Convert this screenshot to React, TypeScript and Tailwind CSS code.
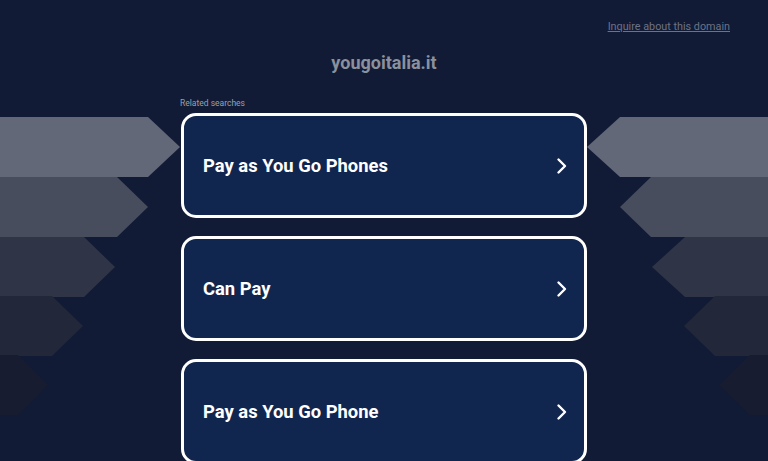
import React from "react";

const items = ["Pay as You Go Phones", "Can Pay", "Pay as You Go Phone"];

function Chevron() {
  return (
    <svg width="14" height="18" viewBox="0 0 14 18" fill="none">
      <path d="M3.5 2.5 L10 9 L3.5 15.5" stroke="white" strokeWidth="2.4" strokeLinecap="round" strokeLinejoin="round" />
    </svg>
  );
}

function Bands() {
  const left = [
    { y: 117, end: 148, tip: 180, c: "#636878" },
    { y: 177, end: 117, tip: 148, c: "#484d5e" },
    { y: 237, end: 84, tip: 115, c: "#2f3447" },
    { y: 296, end: 52, tip: 83, c: "#222739" },
    { y: 355, end: 18, tip: 48, c: "#171c31" },
  ];
  const right = [
    { y: 117, start: 620, tip: 587, c: "#636878" },
    { y: 177, start: 651, tip: 620, c: "#484d5e" },
    { y: 237, start: 685, tip: 652, c: "#2f3447" },
    { y: 296, start: 715, tip: 684, c: "#222739" },
    { y: 355, start: 750, tip: 719, c: "#171c31" },
  ];
  const h = 60;
  return (
    <svg className="absolute inset-0 pointer-events-none" width="768" height="461" viewBox="0 0 768 461">
      {left.map((b, i) => (
        <polygon
          key={"l" + i}
          points={`0,${b.y} ${b.end},${b.y} ${b.tip},${b.y + h / 2} ${b.end},${b.y + h} 0,${b.y + h}`}
          fill={b.c}
        />
      ))}
      {right.map((b, i) => (
        <polygon
          key={"r" + i}
          points={`768,${b.y} ${b.start},${b.y} ${b.tip},${b.y + h / 2} ${b.start},${b.y + h} 768,${b.y + h}`}
          fill={b.c}
        />
      ))}
    </svg>
  );
}

export default function App() {
  return (
    <div
      className="relative w-[768px] h-[461px] overflow-hidden bg-[#111b36]"
      style={{ fontFamily: "Roboto, 'Liberation Sans', sans-serif" }}
    >
      <Bands />
      <div className="relative flex flex-col">
        <div className="flex justify-end pr-[38px] pt-[19px] h-[36px]">
          <a className="text-[10.8px] leading-[16px] text-[#6d7385] underline">Inquire about this domain</a>
        </div>
        <div className="flex justify-center mt-[15px] h-[24px]">
          <span className="text-[18px] leading-[24px] font-bold text-[#8b909d]">yougoitalia.it</span>
        </div>
        <div className="w-[406px] mx-auto mt-[23px] flex flex-col">
          <div className="text-[8.5px] leading-[11px] text-[#9aa0ad] -ml-[1px] h-[11px]">Related searches</div>
          <div className="flex flex-col gap-[18px] mt-[4px]">
            {items.map((t) => (
              <div
                key={t}
                className="h-[105px] rounded-[15px] border-[3px] border-white bg-[#11264f] flex items-center justify-between pl-[19px] pr-[15px]"
              >
                <span className="text-[18.4px] font-bold text-white">{t}</span>
                <Chevron />
              </div>
            ))}
          </div>
        </div>
      </div>
    </div>
  );
}
